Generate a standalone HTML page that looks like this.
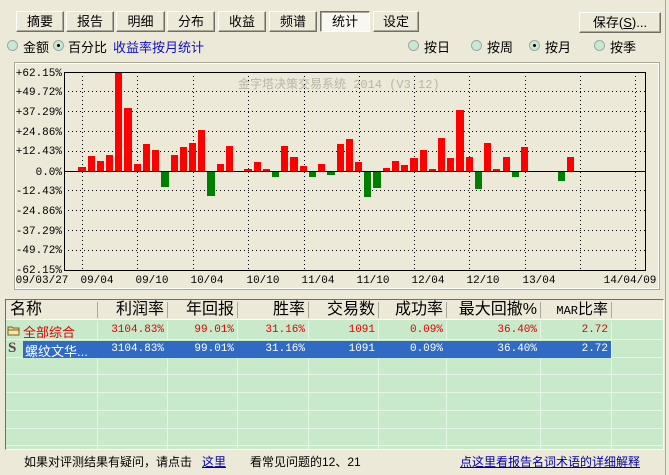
<!DOCTYPE html>
<html><head><meta charset="utf-8">
<style>
*{margin:0;padding:0;box-sizing:border-box}
body{width:669px;height:475px;background:#ece9d8;position:relative;overflow:hidden;font-family:"Liberation Sans","Noto Sans CJK SC",sans-serif;font-size:12px;color:#000}
.a{position:absolute;white-space:nowrap}
.btn{position:absolute;top:11px;height:21px;background:#ece9d8;border:1px solid;border-color:#fff #716f64 #716f64 #fff;box-shadow:inset -1px -1px 0 #aca899;font-size:13px;text-align:center;line-height:19px}
.sel{background:#f8f7f2;border-color:#716f64 #fff #fff #716f64;box-shadow:inset 1px 1px 0 #aca899}
.rad{position:absolute;width:11px;height:11px;border-radius:50%;background:#c8e8d0;border:1px solid #9aa;}
.rad.on::after{content:"";position:absolute;left:3px;top:3px;width:3px;height:3px;background:#000;border-radius:50%}
.mono{font-family:"Liberation Mono","Noto Sans CJK SC",monospace}
.hd{position:absolute;top:301px;font-size:16px;height:18px;line-height:18px;text-align:right}
.c{position:absolute;font-family:"Liberation Mono",monospace;font-size:11px;text-align:right;line-height:16px}
</style></head><body>
<div class="btn" style="left:16px;width:48px">摘要</div>
<div class="btn" style="left:66px;width:48px">报告</div>
<div class="btn" style="left:116px;width:49px">明细</div>
<div class="btn" style="left:167px;width:48px">分布</div>
<div class="btn" style="left:218px;width:48px">收益</div>
<div class="btn" style="left:269px;width:48px">频谱</div>
<div class="btn sel" style="left:320px;width:50px">统计</div>
<div class="btn" style="left:373px;width:46px">设定</div>
<div class="btn" style="left:579px;width:82px;top:12px">保存(<u>S</u>)...</div>

<div class="rad" style="left:7px;top:40px"></div><div class="a" style="left:23px;top:37px;font-size:13px">金额</div>
<div class="rad on" style="left:53px;top:40px"></div><div class="a" style="left:68px;top:37px;font-size:13px">百分比</div>
<div class="a" style="left:113px;top:37px;font-size:13px;color:#1010c0">收益率按月统计</div>
<div class="rad" style="left:408px;top:40px"></div><div class="a" style="left:424px;top:37px;font-size:13px">按日</div>
<div class="rad" style="left:471px;top:40px"></div><div class="a" style="left:487px;top:37px;font-size:13px">按周</div>
<div class="rad on" style="left:529px;top:40px"></div><div class="a" style="left:545px;top:37px;font-size:13px">按月</div>
<div class="rad" style="left:594px;top:40px"></div><div class="a" style="left:610px;top:37px;font-size:13px">按季</div>

<svg class="a" style="left:0;top:0" width="669" height="300">
<rect x="14.5" y="62.5" width="645" height="227" fill="none" stroke="#aca899"/>
<rect x="15.5" y="63.5" width="643" height="225" fill="none" stroke="#fff"/>
<g stroke="#000" stroke-dasharray="1,3" stroke-width="1">
<line x1="64" x2="645" y1="91.5" y2="91.5"/><line x1="64" x2="645" y1="111.5" y2="111.5"/><line x1="64" x2="645" y1="131.5" y2="131.5"/><line x1="64" x2="645" y1="151.5" y2="151.5"/>
<line x1="64" x2="645" y1="190.5" y2="190.5"/><line x1="64" x2="645" y1="210.5" y2="210.5"/><line x1="64" x2="645" y1="230.5" y2="230.5"/><line x1="64" x2="645" y1="250.5" y2="250.5"/>
<line y1="72" y2="270" x1="82.5" x2="82.5"/><line y1="72" y2="270" x1="137.5" x2="137.5"/><line y1="72" y2="270" x1="193.5" x2="193.5"/><line y1="72" y2="270" x1="248.5" x2="248.5"/><line y1="72" y2="270" x1="304.5" x2="304.5"/><line y1="72" y2="270" x1="359.5" x2="359.5"/><line y1="72" y2="270" x1="414.5" x2="414.5"/><line y1="72" y2="270" x1="469.5" x2="469.5"/><line y1="72" y2="270" x1="525.5" x2="525.5"/><line y1="72" y2="270" x1="580.5" x2="580.5"/><line y1="72" y2="270" x1="635.5" x2="635.5"/>
</g>
<text x="238" y="88" fill="#b8b5aa" font-size="12" font-family="Liberation Mono,Noto Sans CJK SC,monospace">金字塔决策交易系统 2014 (V3.12)</text>
<g fill="#ff0000">
<rect x="78" y="167" width="8" height="4"/><rect x="88" y="156" width="7" height="15"/><rect x="97" y="161" width="7" height="10"/><rect x="106" y="155" width="7" height="16"/><rect x="115" y="72" width="7" height="99"/><rect x="124" y="108" width="8" height="63"/><rect x="134" y="164" width="7" height="7"/><rect x="143" y="144" width="7" height="27"/><rect x="152" y="150" width="7" height="21"/><rect x="171" y="155" width="7" height="16"/><rect x="180" y="147" width="7" height="24"/><rect x="189" y="143" width="7" height="28"/><rect x="198" y="130" width="7" height="41"/><rect x="217" y="164" width="7" height="7"/><rect x="226" y="146" width="7" height="25"/><rect x="244" y="169" width="8" height="2"/><rect x="254" y="162" width="7" height="9"/><rect x="263" y="169" width="7" height="2"/><rect x="281" y="146" width="7" height="25"/><rect x="290" y="157" width="8" height="14"/><rect x="300" y="166" width="7" height="5"/><rect x="318" y="164" width="7" height="7"/>
<rect x="337" y="144" width="7" height="27"/><rect x="346" y="139" width="7" height="32"/><rect x="355" y="162" width="7" height="9"/><rect x="383" y="168" width="7" height="3"/><rect x="392" y="161" width="7" height="10"/><rect x="401" y="165" width="7" height="6"/><rect x="410" y="158" width="8" height="13"/><rect x="420" y="150" width="7" height="21"/><rect x="429" y="169" width="7" height="2"/><rect x="438" y="138" width="7" height="33"/><rect x="447" y="158" width="7" height="13"/><rect x="456" y="110" width="8" height="61"/><rect x="466" y="157" width="7" height="14"/><rect x="484" y="143" width="7" height="28"/><rect x="493" y="169" width="7" height="2"/><rect x="503" y="157" width="7" height="14"/><rect x="521" y="147" width="7" height="24"/><rect x="567" y="157" width="7" height="14"/>
</g>
<g fill="#008000">
<rect x="161" y="172" width="8" height="15"/><rect x="207" y="172" width="8" height="24"/><rect x="272" y="172" width="7" height="5"/><rect x="309" y="172" width="7" height="5"/><rect x="327" y="172" width="8" height="3"/><rect x="364" y="172" width="7" height="25"/><rect x="373" y="172" width="8" height="16"/><rect x="475" y="172" width="7" height="17"/><rect x="512" y="172" width="7" height="5"/><rect x="558" y="172" width="7" height="9"/>
</g>
<line x1="64" x2="645" y1="171.5" y2="171.5" stroke="#000"/>
<rect x="64.5" y="72.5" width="581" height="198" fill="none" stroke="#000"/>
<g font-family="Liberation Mono,monospace" font-size="11" text-anchor="end">
<text x="62" y="76">+62.15%</text><text x="62" y="95">+49.72%</text><text x="62" y="115">+37.29%</text><text x="62" y="135">+24.86%</text><text x="62" y="154">+12.43%</text><text x="62" y="175">0.0%</text><text x="62" y="194">-12.43%</text><text x="62" y="214">-24.86%</text><text x="62" y="234">-37.29%</text><text x="62" y="253">-49.72%</text><text x="62" y="273">-62.15%</text>
</g>
<g font-family="Liberation Mono,monospace" font-size="11" text-anchor="middle">
<text x="42" y="283">09/03/27</text><text x="97" y="283">09/04</text><text x="152" y="283">09/10</text><text x="207" y="283">10/04</text><text x="263" y="283">10/10</text><text x="318" y="283">11/04</text><text x="373" y="283">11/10</text><text x="428" y="283">12/04</text><text x="483" y="283">12/10</text><text x="539" y="283">13/04</text><text x="630" y="283">14/04/09</text>
</g>
</svg>

<div class="a" style="left:5px;top:299px;width:659px;height:151px;background:#c8eacb;border:1px solid;border-color:#716f64 #fff #fff #716f64"></div>
<div class="a" style="left:6px;top:300px;width:657px;height:20px;background:#ece9d8;border-bottom:1px solid #fff"></div>
<svg class="a" style="left:0;top:0" width="669" height="475">
<g stroke="#aca899"><line x1="97.5" x2="97.5" y1="302" y2="318"/><line x1="167.5" x2="167.5" y1="302" y2="318"/><line x1="237.5" x2="237.5" y1="302" y2="318"/><line x1="308.5" x2="308.5" y1="302" y2="318"/><line x1="378.5" x2="378.5" y1="302" y2="318"/><line x1="446.5" x2="446.5" y1="302" y2="318"/><line x1="540.5" x2="540.5" y1="302" y2="318"/><line x1="611.5" x2="611.5" y1="302" y2="318"/></g>
<g stroke="#e4f6e6"><line x1="6" x2="662" y1="339.5" y2="339.5"/><line x1="6" x2="662" y1="357.5" y2="357.5"/><line x1="6" x2="662" y1="374.5" y2="374.5"/><line x1="6" x2="662" y1="392.5" y2="392.5"/><line x1="6" x2="662" y1="410.5" y2="410.5"/><line x1="6" x2="662" y1="428.5" y2="428.5"/><line x1="6" x2="662" y1="445.5" y2="445.5"/>
<line x1="97.5" x2="97.5" y1="321" y2="449"/><line x1="167.5" x2="167.5" y1="321" y2="449"/><line x1="237.5" x2="237.5" y1="321" y2="449"/><line x1="308.5" x2="308.5" y1="321" y2="449"/><line x1="378.5" x2="378.5" y1="321" y2="449"/><line x1="446.5" x2="446.5" y1="321" y2="449"/><line x1="540.5" x2="540.5" y1="321" y2="449"/><line x1="611.5" x2="611.5" y1="321" y2="449"/></g>
</svg>
<div class="hd" style="left:10px;text-align:left">名称</div>
<div class="hd" style="left:100px;width:64px">利润率</div>
<div class="hd" style="left:170px;width:64px">年回报</div>
<div class="hd" style="left:240px;width:65px">胜率</div>
<div class="hd" style="left:310px;width:65px">交易数</div>
<div class="hd" style="left:380px;width:63px">成功率</div>
<div class="hd" style="left:450px;width:87px">最大回撤%</div>
<div class="hd" style="left:542px;width:66px;font-size:15px"><span class="mono" style="font-size:12px">MAR</span>比率</div>

<svg class="a" style="left:7px;top:324px" width="14" height="12"><path d="M1 3h4l1 1h6v7H1z" fill="#e8d890" stroke="#806020"/><path d="M1 6h11v5H1z" fill="#f4e8a8" stroke="#806020"/></svg>
<div class="a" style="left:23px;top:322px;color:#e00000;font-size:13px">全部综合</div>
<div class="a" style="left:23px;top:341px;width:588px;height:17px;background:#316ac5"></div>
<div class="a" style="left:8px;top:340px;font-family:'Liberation Serif',serif;font-weight:bold;font-size:15px;color:#604040">S</div>
<div class="a" style="left:25px;top:341px;color:#fff;font-size:13px">螺纹文华...</div>
<div style="color:#e00000">
<div class="c" style="left:100px;width:64px;top:322px">3104.83%</div><div class="c" style="left:170px;width:64px;top:322px">99.01%</div><div class="c" style="left:240px;width:65px;top:322px">31.16%</div><div class="c" style="left:310px;width:65px;top:322px">1091</div><div class="c" style="left:380px;width:63px;top:322px">0.09%</div><div class="c" style="left:450px;width:87px;top:322px">36.40%</div><div class="c" style="left:542px;width:66px;top:322px">2.72</div>
</div>
<div style="color:#fff">
<div class="c" style="left:100px;width:64px;top:341px">3104.83%</div><div class="c" style="left:170px;width:64px;top:341px">99.01%</div><div class="c" style="left:240px;width:65px;top:341px">31.16%</div><div class="c" style="left:310px;width:65px;top:341px">1091</div><div class="c" style="left:380px;width:63px;top:341px">0.09%</div><div class="c" style="left:450px;width:87px;top:341px">36.40%</div><div class="c" style="left:542px;width:66px;top:341px">2.72</div>
</div>
<div class="a" style="left:24px;top:453px">如果对评测结果有疑问，请点击</div>
<div class="a" style="left:202px;top:453px;color:#0000a0;text-decoration:underline">这里</div>
<div class="a" style="left:250px;top:453px">看常见问题的12、21</div>
<div class="a" style="left:460px;top:453px;color:#0000a0;text-decoration:underline">点这里看报告名词术语的详细解释</div>
<div class="a" style="left:665px;top:0;width:1px;height:475px;background:#aca899"></div>
</body></html>
